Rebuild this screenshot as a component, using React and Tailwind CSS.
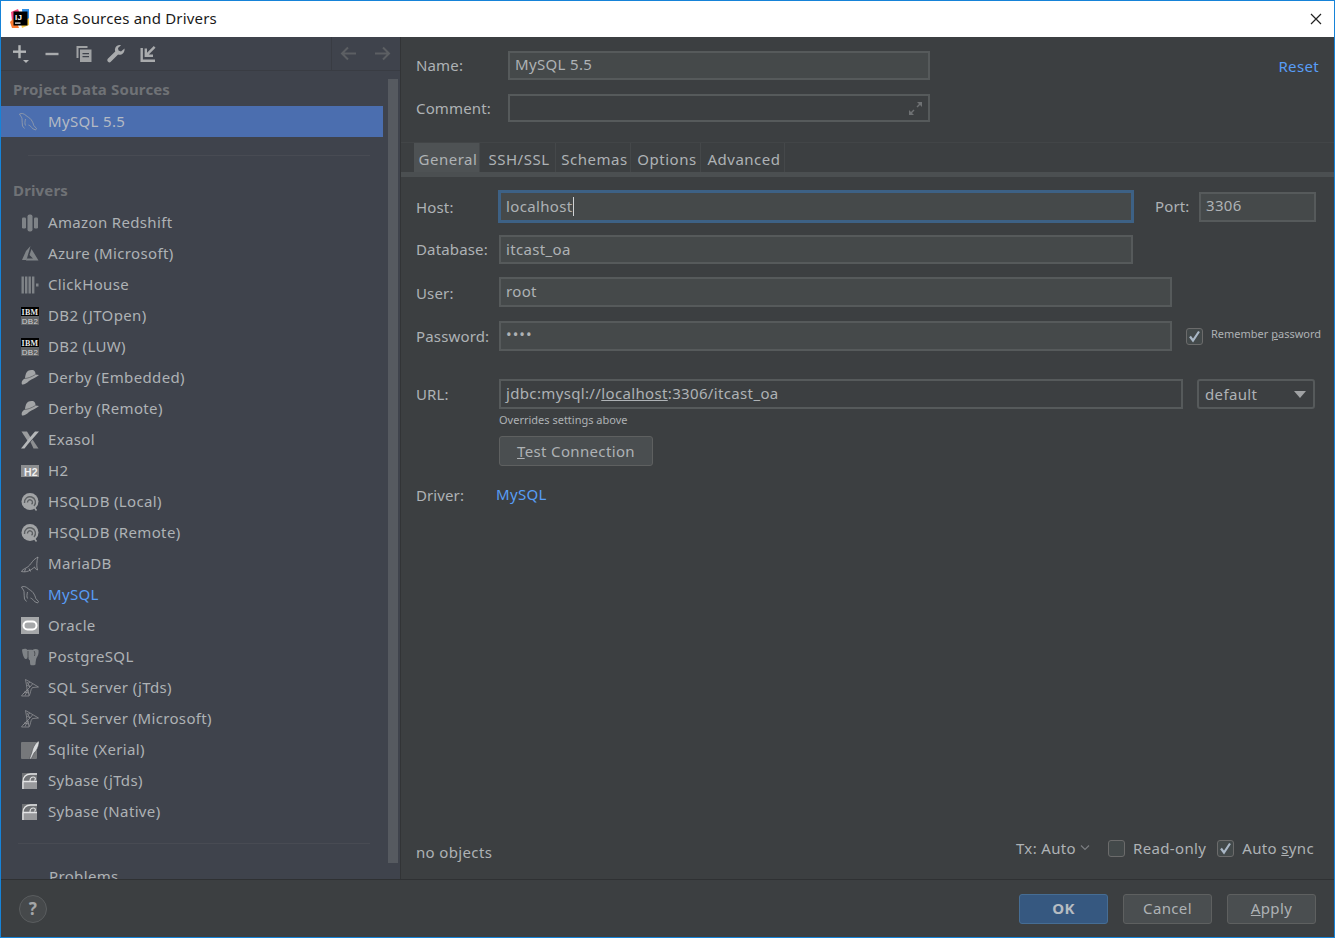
const drivers = [
  { name: 'Amazon Redshift', icon: 'redshift' },
  { name: 'Azure (Microsoft)', icon: 'azure' },
  { name: 'ClickHouse', icon: 'clickhouse' },
  { name: 'DB2 (JTOpen)', icon: 'db2' },
  { name: 'DB2 (LUW)', icon: 'db2' },
  { name: 'Derby (Embedded)', icon: 'derby' },
  { name: 'Derby (Remote)', icon: 'derby' },
  { name: 'Exasol', icon: 'exasol' },
  { name: 'H2', icon: 'h2' },
  { name: 'HSQLDB (Local)', icon: 'hsqldb' },
  { name: 'HSQLDB (Remote)', icon: 'hsqldb' },
  { name: 'MariaDB', icon: 'mariadb' },
  { name: 'MySQL', icon: 'mysql', active: true },
  { name: 'Oracle', icon: 'oracle' },
  { name: 'PostgreSQL', icon: 'postgres' },
  { name: 'SQL Server (jTds)', icon: 'sqlserver' },
  { name: 'SQL Server (Microsoft)', icon: 'sqlserver' },
  { name: 'Sqlite (Xerial)', icon: 'sqlite' },
  { name: 'Sybase (jTds)', icon: 'sybase' },
  { name: 'Sybase (Native)', icon: 'sybase' }
];

const tabs = [
  { name: 'General', w: 'w-[66px]', active: true },
  { name: 'SSH/SSL', w: 'w-[76px]' },
  { name: 'Schemas', w: 'w-[75px]' },
  { name: 'Options', w: 'w-[70px]' },
  { name: 'Advanced', w: 'w-[84px]' }
];

function DriverIcon({ type, color = '#7f8387' }) {
  const box = 'h-[18px] w-[18px] shrink-0';
  switch (type) {
    case 'redshift':
      return (
        <svg className={box} viewBox="0 0 18 18" fill={color}>
          <rect x="1" y="3.5" width="4" height="11" rx="1.2" />
          <rect x="6.5" y="0.5" width="5" height="17" rx="2" />
          <rect x="13" y="3.5" width="4" height="11" rx="1.2" />
        </svg>
      );
    case 'azure':
      return (
        <svg className={box} viewBox="0 0 18 18" fill={color}>
          <path d="M9.5 1L5 6 1 15h4.5L9.5 1z" />
          <path d="M10.5 4L8.5 10l3.5 3.5H5.5L5 15.500h12.500L10.500 4z" />
        </svg>
      );
    case 'clickhouse':
      return (
        <svg className={box} viewBox="0 0 18 18" fill={color}>
          <rect x="0.5" y="0.5" width="2.4" height="17" />
          <rect x="4" y="0.5" width="2.4" height="17" />
          <rect x="7.5" y="0.5" width="2.4" height="17" />
          <rect x="11" y="0.5" width="2.4" height="17" />
          <rect x="15" y="7.5" width="2.5" height="3" />
        </svg>
      );
    case 'db2':
      return (
        <svg className={box} viewBox="0 0 18 18">
          <rect width="18" height="9" fill="#000" />
          <rect y="9" width="18" height="9" fill="#5f6164" />
          <text x="9" y="7.5" textAnchor="middle" fontSize="8" fontWeight="700" fontFamily="Liberation Serif" fill="#e8e8e8">IBM</text>
          <text x="9" y="16.5" textAnchor="middle" fontSize="8" fontFamily="Liberation Sans" fill="#d0d0d0">DB2</text>
        </svg>
      );
    case 'derby':
      return (
        <svg className={box} viewBox="0 0 18 18" fill="#a3a5a7">
          <path d="M5 4.500C6 1.500 9 .5 12 1c2 .5 2.500 2.500 2.500 4.500l3.500.5c-3 2.500-7 4-10 6-2.500 2.500-5 4-7 3.500-1-2.500.5-5 3-6C4 8 4.500 6 5 4.500z" />
          <path d="M3.500 9.500c3 0 7-1.500 11-4" fill="none" stroke="#54575c" strokeWidth="0.700" />
        </svg>
      );
    case 'exasol':
      return (
        <svg className={box} viewBox="0 0 18 18">
          <path d="M0.500 0.500h5.500l4 6.500-3 3.500z" fill="#9a9c9e" />
          <path d="M18 0.500L7 13 3.500 17.500H0L8 7.500 14 0.500z" fill="#b5b7b9" />
          <path d="M9.500 11l2-2.500 6 9h-5z" fill="#8d8f91" />
        </svg>
      );
    case 'h2':
      return (
        <svg className={box} viewBox="0 0 18 18">
          <rect y="3" width="18" height="12" fill="#8c8e90" />
          <text x="10" y="13.500" textAnchor="middle" fontSize="10.500" fontWeight="700" fontFamily="Liberation Sans" fill="#f0f0f0">H2</text>
        </svg>
      );
    case 'hsqldb':
      return (
        <svg className={box} viewBox="0 0 18 18" fill="none">
          <circle cx="9" cy="8.500" r="8.500" fill="#a2a4a6" />
          <path d="M3.500 10a5.500 5.500 0 1 1 9.500 3M6.500 9.500a2.500 2.500 0 1 1 4 1.800" stroke="#5d6063" strokeWidth="1.400" />
          <path d="M13 14l2.500 3.500" stroke="#a2a4a6" strokeWidth="1.500" />
        </svg>
      );
    case 'mariadb':
      return (
        <svg className={box} viewBox="0 0 18 18" fill="none" stroke="#a9abad" strokeWidth="0.700">
          <path d="M0.500 16.500c.5-1.500 2.500-2.500 4.500-3.500 3-1.500 4.500-4 6.500-6.500 1.500-2 3-3 5.500-4.500-.5 2.500-1 3-1 5-.3 2.500-.3 5 .5 8-1.500-.5-2.500-1.500-3-3-1.500 1.500-3.500 3-6 4-2.500 1-5 1-7 .5z" />
          <path d="M4.500 14l-1 2.500M8 13.500l1.500 3" />
        </svg>
      );
    case 'mysql':
      return (
        <svg className={box} viewBox="0 0 18 18" fill="none" stroke="#a5a8ab" strokeWidth="0.700">
          <path d="M0.500 1C2.500 0 5 .5 7 2.500c1.500 1.500 3.500 2 5 4 1.500 2 2.500 4.500 2.800 6l2.700 3-1 1.500-3-1.500c-1-1.500-2.500-3-4-3.500" />
          <path d="M0.500 1c.5 1.500 2 2.500 2.500 4.500.3 2.500 0 5 .5 7.500l2 2.500" />
          <path d="M6.500 6c-.5 2.500-1 4.500 0 6.500" />
        </svg>
      );
    case 'oracle':
      return (
        <svg className={box} viewBox="0 0 18 18">
          <rect width="18" height="17" fill="#a5a7a9" />
          <rect x="2.500" y="4.500" width="13" height="8" rx="4" fill="none" stroke="#fff" strokeWidth="2" />
        </svg>
      );
    case 'postgres':
      return (
        <svg className={box} viewBox="0 0 18 18" fill={color}>
          <path d="M1 1.500C3 .500 5.500.500 6.500 2c1-.5 4-.5 5 0 1.500-1.500 4.500-1.500 6 0 .5 3-.5 6-2 8-.5 1.500-1 4-1 6.500-1 1-3.500 1-5 .5-.5-1-.5-3-.5-4.500-1-.5-1.500-2-2-3.500-.5 1-1 2-2 2-2 .5-4-6-4-10z" />
          <path d="M7 3v7M13 3c1 1 1 3 .5 5" stroke="#404348" strokeWidth="0.800" fill="none" />
        </svg>
      );
    case 'sqlserver':
      return (
        <svg className={box} viewBox="0 0 18 18" fill="none" stroke="#8f9194" strokeWidth="0.800">
          <path d="M4.500 0.500L9 3l8.500 5-6 .5C9 11 10 14 8 17H0.500C2 14.500 4 13 6 11 6 8 5 4 4.500.5z" />
          <path d="M2 15l5-4.500 1 6M3 13l5 1M6 3l3 5-3 3M9 8l-3-2M4 16.500l3-5.500M9 3l-2 1.500M11.500 5L9 8" />
        </svg>
      );
    case 'sqlite':
      return (
        <svg className={box} viewBox="0 0 18 18">
          <rect y="1" width="16" height="17" rx="1" fill="#76787b" />
          <path d="M18 0c.5 3-1.500 9-5 12l-3 6H8.500L11 11c1-5 4-10 7-11z" fill="#d8dadc" stroke="#404348" strokeWidth="0.500" />
        </svg>
      );
    case 'sybase':
      return (
        <svg className={box} viewBox="0 0 18 18" fill="none">
          <rect x="1" y="1" width="15" height="8.500" fill="#6f7174" />
          <rect x="1" y="9.500" width="15" height="7.500" fill="#98999c" />
          <path d="M2 17V9.500C2 5 5 2 9.500 2H16M2.500 9.500H16" stroke="#e3e4e5" strokeWidth="1.300" />
          <path d="M9 9c0-2.500 1.500-4 3.500-4S15 7 13.500 8.500" stroke="#e3e4e5" strokeWidth="1.100" />
        </svg>
      );
    default:
      return null;
  }
}

function Checkbox({ checked }) {
  return (
    <span className="flex h-[17px] w-[17px] shrink-0 items-center justify-center rounded-[3px] border border-[#6b6b6b] bg-[#43494a]">
      {checked ? (
        <svg className="h-[13px] w-[13px]" viewBox="0 0 13 13" fill="none" stroke="#a9b7c6" strokeWidth="2.200">
          <path d="M2 6.500l3 4L11 1.500" />
        </svg>
      ) : null}
    </span>
  );
}

function Label({ children, w = 'w-[83px]' }) {
  return <span className={`${w} shrink-0 text-[15px] tracking-[0.15px]`}>{children}</span>;
}

const fieldClass = 'flex items-center border-2 border-[#565a5b] bg-[#45494a] px-[5px] pb-[2px] text-[15px] leading-none';

function App() {
  return (
    <div className="flex h-[938px] w-[1335px] flex-col overflow-hidden border border-[#1683d8] bg-[#3c3f41] font-['Noto_Sans',sans-serif] text-[#aeb2b5] tracking-[0.35px]">
      {/* title bar */}
      <div className="flex h-[36px] shrink-0 items-center bg-white pb-[1px] pl-[9px] pr-[12px] text-[15px] text-[#1a1a1a] tracking-[0.18px]">
        <svg className="mr-[5px] h-[20px] w-[20px]" viewBox="0 0 20 20">
          <path d="M1 3l7-3 3 8-9 4z" fill="#f5447d" />
          <path d="M0 13l5-5 4 11H2z" fill="#fd7a2f" />
          <path d="M12 0h7v10l-6 2z" fill="#2f8fe6" />
          <path d="M11 15l8-6v7l-7 3z" fill="#f6c945" />
          <rect x="3.500" y="2.500" width="14" height="14" fill="#000" />
          <rect x="5" y="13.500" width="5.500" height="1.200" fill="#fff" />
          <text x="5" y="11" fontSize="8" fontWeight="700" fontFamily="Liberation Sans" fill="#fff">IJ</text>
        </svg>
        <span>Data Sources and Drivers</span>
        <svg className="ml-auto h-[12px] w-[12px]" viewBox="0 0 12 12" stroke="#222" strokeWidth="1.200" fill="none">
          <path d="M1 1l10 10M11 1L1 11" />
        </svg>
      </div>

      <div className="flex min-h-0 flex-1">
        {/* left panel */}
        <aside className="flex w-[400px] shrink-0 flex-col overflow-hidden border-r border-[#323436] bg-[#3f434c]">
          <div className="flex h-[34px] shrink-0 items-center border-b border-[#393c43] text-[#a9abad]">
            <div className="flex flex-1 items-center pl-[10px]">
              <svg className="h-[20px] w-[20px]" viewBox="0 0 20 20" fill="#b3b5b7">
                <rect x="2" y="6.500" width="13" height="2.400" />
                <rect x="7.300" y="1.200" width="2.400" height="13" />
                <path d="M12 16h6l-3 3z" />
              </svg>
              <svg className="ml-[13px] h-[16px] w-[16px]" viewBox="0 0 16 16" fill="#a9abad">
                <rect x="1.500" y="6.800" width="13" height="2.400" />
              </svg>
              <svg className="ml-[15px] h-[18px] w-[18px]" viewBox="0 0 18 18" fill="#a0a2a4">
                <path d="M1.500 1h11v2H3.500v10h-2z" />
                <path d="M5 4.500h11.500V17H5zM7.500 8v1.300h6.500V8zm0 3v1.300h6.500V11z" fillRule="evenodd" />
              </svg>
              <svg className="ml-[14px] h-[18px] w-[18px]" viewBox="0 0 18 18" fill="#a9abad">
                <path d="M17.500 3.500l-3.500 3-2.500-1-.5-2.500 3-2.800C11.500-.5 8.500 1 8 4c-.2 1 .1 2 .2 2.500L.8 13.800c-.8 1-.6 2.200.2 3 .9.800 2 .8 2.800 0l7.300-7.300c3.500 1 7-2 6.400-6z" />
              </svg>
              <svg className="ml-[14px] h-[18px] w-[18px]" viewBox="0 0 18 18" fill="#a9abad">
                <path d="M1.500 3h2.400v11.500H16V17H1.500z" />
                <path d="M16.500 2.700l-1.700-1.700-6.800 6.800V3.500H5.600V12H14V9.600H9.800z" />
              </svg>
            </div>
            <div className="flex h-full w-[69px] items-center border-l border-[#393c43] pl-[8px]">
              <svg className="h-[17px] w-[17px]" viewBox="0 0 17 17" fill="none" stroke="#5c5f63" strokeWidth="2">
                <path d="M16 8.500H2M8 2.500l-6 6 6 6" />
              </svg>
              <svg className="ml-[17px] h-[17px] w-[17px]" viewBox="0 0 17 17" fill="none" stroke="#5c5f63" strokeWidth="2">
                <path d="M1 8.500h14M9 2.500l6 6-6 6" />
              </svg>
            </div>
          </div>

          <div className="flex min-h-0 flex-1">
            <div className="w-[382px] shrink-0">
              <div className="flex h-[35px] items-center pl-[12px] pt-[2px] text-[15px] font-bold text-[#6f7276] tracking-[0.15px]">
                Project Data Sources
              </div>
              <div className="flex h-[31px] items-center bg-[#4b6eaf] pl-[18px] text-[15px] text-[#b4bac4]">
                <DriverIcon type="mysql" />
                <span className="ml-[11px]">MySQL 5.5</span>
              </div>
              <div className="ml-[27px] mr-[13px] mt-[18px] h-px bg-[#484b53]" />
              <div className="mt-[20px] flex h-[28px] items-center pl-[12px] text-[15px] font-bold text-[#6f7276] tracking-[0.15px]">
                Drivers
              </div>
              <div className="mt-[3px]">
                {drivers.map((driver) => (
                  <div key={driver.name} className="flex h-[31px] items-center pl-[20px] text-[15px]">
                    <DriverIcon type={driver.icon} />
                    <span className={`ml-[9px] whitespace-nowrap ${driver.active ? 'text-[#589df6]' : ''}`}>{driver.name}</span>
                  </div>
                ))}
              </div>
              <div className="ml-[17px] mr-[13px] mt-[16px] h-px bg-[#484b53]" />
              <div className="mt-[22px] flex items-center pl-[48px] text-[15px] leading-[20px]">
                Problems
                <span className="ml-[7px] mt-[12px] h-px w-[20px] bg-[#85898c]" />
              </div>
            </div>
            <div className="ml-[5px] mt-[8px] mb-[16px] w-[10px] bg-[#565a60]" />
          </div>
        </aside>

        {/* right panel */}
        <main className="flex min-w-0 flex-1 flex-col">
          <div className="flex">
            <div className="w-[851px] shrink-0">
              <div className="mt-[14px] flex h-[29px] items-center pl-[15px]">
                <Label w="w-[92px]">Name:</Label>
                <div className={`${fieldClass} h-[29px] w-[422px]`}>MySQL 5.5</div>
              </div>
              <div className="mt-[14px] flex h-[28px] items-center pl-[15px]">
                <Label w="w-[92px]">Comment:</Label>
                <div className="flex h-[28px] w-[422px] items-center justify-end border-2 border-[#565a5b] pr-[5px]">
                  <svg className="h-[15px] w-[15px]" viewBox="0 0 15 15" fill="#6e7173">
                    <path d="M9 1h5v5l-2-2-2.500 2.500-1-1L11 3zM6 14H1V9l2 2 2.500-2.500 1 1L4 12z" />
                  </svg>
                </div>
              </div>
            </div>
            <a className="ml-auto mr-[15px] mt-[20px] text-[15px] leading-[18px] text-[#589df6]">Reset</a>
          </div>

          {/* tabs */}
          <div className="mt-[20px] flex h-[35px] shrink-0 border-t border-[#424547] border-b-[5px] border-b-[#4b4f51] pl-[13px]">
            {tabs.map((tab) => (
              <div
                key={tab.name}
                className={`flex ${tab.w} items-center justify-center border-r border-[#45484a] pl-[3px] pt-[4px] text-[15px] tracking-[0.5px] ${tab.active ? 'bg-[#4e5254]' : ''}`}
              >
                {tab.name}
              </div>
            ))}
          </div>

          {/* connection form */}
          <div className="mt-[13px] flex h-[33px] items-center pl-[15px]">
            <Label w="w-[82px]"><span className="relative top-[1px]">Host:</span></Label>
            <div className="flex h-[33px] w-[636px] items-center border-[3px] border-[#3d6185] bg-[#45494a] px-[5px] text-[15px] leading-none">
              <span className="border-r border-[#cfd2d4] py-[2px]">localhost</span>
            </div>
            <span className="ml-[21px] w-[44px] text-[15px] tracking-[0.15px]">Port:</span>
            <div className={`${fieldClass} h-[30px] w-[117px]`}>3306</div>
          </div>
          <div className="mt-[12px] flex h-[29px] items-center pl-[15px]">
            <Label>Database:</Label>
            <div className="flex h-[29px] w-[634px] items-center border-2 border-[#565a5b] bg-[#45494a] px-[5px] text-[15px] leading-none">itcast_oa</div>
          </div>
          <div className="mt-[13px] flex h-[30px] items-center pl-[15px]">
            <Label><span className="relative top-[1px]">User:</span></Label>
            <div className={`${fieldClass} h-[30px] w-[673px]`}>root</div>
          </div>
          <div className="mt-[14px] flex h-[30px] items-center pl-[15px]">
            <Label>Password:</Label>
            <div className={`${fieldClass} h-[30px] w-[673px]`}>
              <span className="relative top-[-1px] tracking-[1px]">••••</span>
            </div>
            <span className="ml-[14px]"><Checkbox checked /></span>
            <span className="mb-[3px] ml-[8px] whitespace-nowrap text-[11px] tracking-normal">
              Remember <u>p</u>assword
            </span>
          </div>
          <div className="mt-[28px] flex h-[30px] items-center pl-[15px]">
            <Label>URL:</Label>
            <div className="flex h-[30px] w-[684px] items-center border-2 border-[#565a5b] px-[5px] pb-[2px] text-[15px] leading-none">
              jdbc:mysql://<u>localhost</u>:3306/itcast_oa
            </div>
            <div className="ml-[14px] flex h-[30px] w-[118px] items-center justify-between rounded-[3px] border-2 border-[#565a5b] pl-[6px] pr-[7px] text-[15px]">
              default
              <svg className="h-[7px] w-[12px]" viewBox="0 0 12 7" fill="#a0a2a4">
                <path d="M0 0h12L6 7z" />
              </svg>
            </div>
          </div>
          <div className="ml-[98px] mt-[3px] h-[16px] text-[11px] leading-[16px] tracking-normal">Overrides settings above</div>
          <div className="ml-[98px] mt-[8px] flex h-[30px] w-[154px] items-center justify-center rounded-[3px] border border-[#5e6060] bg-[#4a4e50] text-[15px]">
            <span><u>T</u>est Connection</span>
          </div>
          <div className="mt-[17px] flex h-[22px] items-center pl-[15px]">
            <span className="mt-[2px] w-[80px] text-[15px] tracking-[0.1px]">Driver:</span>
            <a className="text-[15px] text-[#589df6]">MySQL</a>
          </div>

          {/* status row */}
          <div className="mb-[17px] mt-auto flex items-end pl-[15px] pr-[20px] text-[15px]">
            <span className="leading-[20px]">no objects</span>
            <div className="mb-[2px] ml-auto flex h-[24px] items-center">
              <span>Tx: Auto</span>
              <svg className="ml-[4px] h-[8px] w-[10px]" viewBox="0 0 10 8" fill="none" stroke="#7a7d80" strokeWidth="1.200">
                <path d="M1 1.500l4 4 4-4" />
              </svg>
              <span className="ml-[18px]"><Checkbox /></span>
              <span className="ml-[8px]">Read-only</span>
              <span className="ml-[11px]"><Checkbox checked /></span>
              <span className="ml-[8px]">Auto <u>s</u>ync</span>
            </div>
          </div>
        </main>
      </div>

      {/* footer */}
      <footer className="flex h-[58px] shrink-0 items-center border-t border-[#2f3133] pl-[18px] pr-[18px]">
        <span className="flex h-[28px] w-[28px] items-center justify-center rounded-full border border-[#5a5d5f] bg-[#46494b] text-[17px] font-bold text-[#a4a6a8]">?</span>
        <button type="button" className="ml-auto h-[30px] w-[89px] rounded-[3px] border border-[#466d94] bg-[#365880] text-[15px] font-bold text-[#b6bcc2]">OK</button>
        <button type="button" className="ml-[15px] h-[30px] w-[89px] rounded-[3px] border border-[#5e6060] bg-[#4a4e50] text-[15px]">Cancel</button>
        <button type="button" className="ml-[15px] h-[30px] w-[89px] rounded-[3px] border border-[#5e6060] bg-[#4a4e50] text-[15px]"><u>A</u>pply</button>
      </footer>
    </div>
  );
}

export default App;
